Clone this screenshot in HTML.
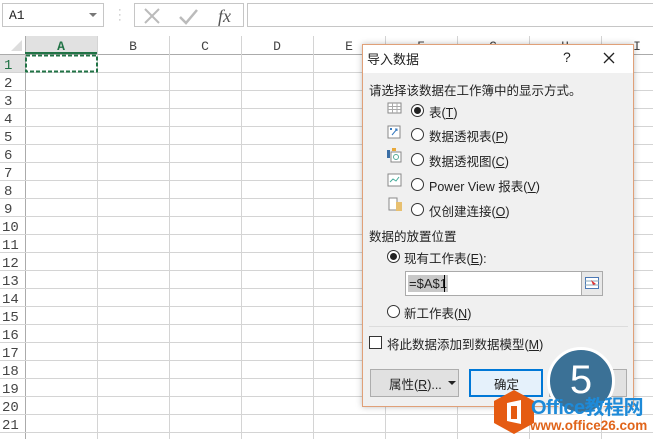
<!DOCTYPE html>
<html><head><meta charset="utf-8"><style>
*{margin:0;padding:0;box-sizing:border-box}
body{width:653px;height:439px;overflow:hidden;background:#fff;position:relative;font-family:"Liberation Sans","Noto Sans CJK SC",sans-serif;font-size:12px;color:#222}
.a{position:absolute}
.radio{position:absolute;width:13px;height:13px;border:1px solid #333;border-radius:50%;background:#fff}
.radio.on::after{content:"";position:absolute;left:2px;top:2px;width:7px;height:7px;border-radius:50%;background:#222}
.lbl{position:absolute;font-size:12.5px;color:#222;white-space:nowrap}
</style></head><body>
<div class="a" style="left:0;top:0;width:653px;height:32px;background:#fff"></div>
<div class="a" style="left:2px;top:3px;width:102px;height:24px;border:1px solid #c6c6c6;font-family:'Liberation Mono',monospace;font-size:13px;padding:4px 6px">A1</div>
<div class="a" style="left:89px;top:13px;width:0;height:0;border-left:4px solid transparent;border-right:4px solid transparent;border-top:4px solid #777"></div>
<div class="a" style="left:118px;top:8px;color:#aaa;font-size:11px;line-height:5px">·<br>·<br>·</div>
<div class="a" style="left:134px;top:3px;width:110px;height:24px;border:1px solid #c6c6c6"></div>
<svg class="a" style="left:142px;top:6px" width="100" height="20"><path d="M3 3L17 17M17 3L3 17" stroke="#bbb" stroke-width="2"/><path d="M38 11L44 17L55 4" stroke="#bbb" stroke-width="2.5" fill="none"/><text x="76" y="16" font-family="Liberation Serif" font-style="italic" font-size="18" fill="#555">fx</text></svg>
<div class="a" style="left:247px;top:3px;width:410px;height:24px;border:1px solid #c6c6c6"></div>
<svg class="a" style="left:0;top:36px" width="653" height="403">
<rect x="25" y="0" width="72" height="18" fill="#e1e1e1"/>
<rect x="0" y="18" width="25" height="18" fill="#e1e1e1"/>
<path d="M22 4L22 15L11 15Z" fill="#ddd"/>
<g stroke="#d4d4d4" stroke-width="1">
<line x1="0" y1="18.5" x2="653" y2="18.5" stroke="#ababab"/>
<line x1="25.5" y1="0" x2="25.5" y2="403" stroke="#ababab"/>
<line x1="97.5" y1="0" x2="97.5" y2="403"/><line x1="169.5" y1="0" x2="169.5" y2="403"/><line x1="241.5" y1="0" x2="241.5" y2="403"/><line x1="313.5" y1="0" x2="313.5" y2="403"/><line x1="385.5" y1="0" x2="385.5" y2="403"/><line x1="457.5" y1="0" x2="457.5" y2="403"/><line x1="529.5" y1="0" x2="529.5" y2="403"/><line x1="601.5" y1="0" x2="601.5" y2="403"/>
<line x1="0" y1="36.5" x2="653" y2="36.5"/><line x1="0" y1="54.5" x2="653" y2="54.5"/><line x1="0" y1="72.5" x2="653" y2="72.5"/><line x1="0" y1="90.5" x2="653" y2="90.5"/><line x1="0" y1="108.5" x2="653" y2="108.5"/><line x1="0" y1="126.5" x2="653" y2="126.5"/><line x1="0" y1="144.5" x2="653" y2="144.5"/><line x1="0" y1="162.5" x2="653" y2="162.5"/><line x1="0" y1="180.5" x2="653" y2="180.5"/><line x1="0" y1="198.5" x2="653" y2="198.5"/><line x1="0" y1="216.5" x2="653" y2="216.5"/><line x1="0" y1="234.5" x2="653" y2="234.5"/><line x1="0" y1="252.5" x2="653" y2="252.5"/><line x1="0" y1="270.5" x2="653" y2="270.5"/><line x1="0" y1="288.5" x2="653" y2="288.5"/><line x1="0" y1="306.5" x2="653" y2="306.5"/><line x1="0" y1="324.5" x2="653" y2="324.5"/><line x1="0" y1="342.5" x2="653" y2="342.5"/><line x1="0" y1="360.5" x2="653" y2="360.5"/><line x1="0" y1="378.5" x2="653" y2="378.5"/><line x1="0" y1="396.5" x2="653" y2="396.5"/>
</g>
<line x1="25" y1="17" x2="97" y2="17" stroke="#217346" stroke-width="2"/>
<g font-family="Liberation Mono,monospace" font-size="13" fill="#444" text-anchor="middle">
<text x="61" y="14" fill="#217346" font-weight="bold">A</text><text x="133" y="14">B</text><text x="205" y="14">C</text><text x="277" y="14">D</text><text x="349" y="14">E</text><text x="421" y="14">F</text><text x="493" y="14">G</text><text x="565" y="14">H</text><text x="637" y="14">I</text>
</g>
<g font-family="Liberation Mono,monospace" font-size="14" fill="#444">
<text x="4" y="33" fill="#217346">1</text><text x="4" y="51">2</text><text x="4" y="69">3</text><text x="4" y="87">4</text><text x="4" y="105">5</text><text x="4" y="123">6</text><text x="4" y="141">7</text><text x="4" y="159">8</text><text x="4" y="177">9</text><text x="2" y="195">10</text><text x="2" y="213">11</text><text x="2" y="231">12</text><text x="2" y="249">13</text><text x="2" y="267">14</text><text x="2" y="285">15</text><text x="2" y="303">16</text><text x="2" y="321">17</text><text x="2" y="339">18</text><text x="2" y="357">19</text><text x="2" y="375">20</text><text x="2" y="393">21</text>
</g>
<rect x="26" y="19.5" width="71" height="16" fill="none" stroke="#217346" stroke-width="2" stroke-dasharray="4 2"/>
</svg>
<div class="a" style="left:362px;top:44px;width:272px;height:363px;background:#f0f0f0;border:1px solid #e0a078;box-shadow:0 0 6px rgba(0,0,0,.25)"></div>
<div class="a" style="left:363px;top:45px;width:270px;height:28px;background:#fff"></div>
<div class="lbl" style="left:367px;top:49px;font-size:13px">导入数据</div>
<div class="lbl" style="left:563px;top:49px;font-size:14px">?</div>
<svg class="a" style="left:603px;top:52px" width="12" height="12"><path d="M1 1L11 11M11 1L1 11" stroke="#222" stroke-width="1.3"/></svg>
<div class="lbl" style="left:369px;top:80px">请选择该数据在工作簿中的显示方式。</div>
<svg class="a" style="left:387px;top:102px" width="16" height="120">
<rect x="1" y="1" width="13" height="10" fill="#fff" stroke="#888"/><path d="M1 4.5H14M1 7.5H14M5.5 1V11M10 1V11" stroke="#aaa"/>
<rect x="1" y="24" width="12" height="12" fill="#fff" stroke="#888"/><path d="M5 33L10 27M8 27H10V29" stroke="#3a7cc0"/><rect x="3" y="26" width="2" height="2" fill="#3a7cc0"/>
<rect x="0" y="48" width="3" height="8" fill="#3a6ea5"/><rect x="4" y="50" width="10" height="10" fill="#fff" stroke="#888"/><circle cx="9" cy="55" r="2.5" fill="none" stroke="#5a9"/><rect x="5" y="46" width="4" height="3" fill="#e8a83a"/>
<rect x="1" y="72" width="13" height="12" fill="#fff" stroke="#888"/><path d="M3 80L6 77L9 79L12 75" stroke="#4a9" fill="none"/>
<rect x="2" y="96" width="8" height="12" fill="#fff" stroke="#888"/><rect x="9" y="100" width="6" height="9" fill="#e8c070"/>
</svg>
<div class="radio on" style="left:411px;top:104px"></div><div class="lbl" style="left:429px;top:102px">表(<u>T</u>)</div>
<div class="radio" style="left:411px;top:128px"></div><div class="lbl" style="left:429px;top:126px">数据透视表(<u>P</u>)</div>
<div class="radio" style="left:411px;top:153px"></div><div class="lbl" style="left:429px;top:151px">数据透视图(<u>C</u>)</div>
<div class="radio" style="left:411px;top:178px"></div><div class="lbl" style="left:429px;top:176px">Power View 报表(<u>V</u>)</div>
<div class="radio" style="left:411px;top:203px"></div><div class="lbl" style="left:429px;top:201px">仅创建连接(<u>O</u>)</div>
<div class="lbl" style="left:369px;top:226px">数据的放置位置</div>
<div class="radio on" style="left:387px;top:250px"></div><div class="lbl" style="left:404px;top:248px">现有工作表(<u>E</u>):</div>
<div class="a" style="left:405px;top:271px;width:177px;height:25px;background:#fff;border:1px solid #aaa"></div>
<div class="a" style="left:408px;top:275px;height:17px;padding:0 1px;background:#c8c8c8;font-size:13px;line-height:17px">=$A$1</div>
<div class="a" style="left:444px;top:275px;width:1px;height:17px;background:#000"></div>
<div class="a" style="left:581px;top:271px;width:22px;height:25px;background:#e8e8e8;border:1px solid #aaa"></div>
<svg class="a" style="left:585px;top:277px" width="14" height="12"><rect x="0.5" y="0.5" width="13" height="11" fill="#fff" stroke="#4a78b5"/><path d="M0 4H14M0 8H14" stroke="#8ab"/><path d="M6 3L11 7L8 8Z" fill="#d33"/></svg>
<div class="radio" style="left:387px;top:305px"></div><div class="lbl" style="left:404px;top:303px">新工作表(<u>N</u>)</div>
<div class="a" style="left:369px;top:326px;width:259px;height:1px;background:#dcdcdc"></div>
<div class="a" style="left:369px;top:336px;width:13px;height:13px;background:#fff;border:1px solid #333"></div>
<div class="lbl" style="left:387px;top:334px">将此数据添加到数据模型(<u>M</u>)</div>
<div class="a" style="left:370px;top:369px;width:89px;height:28px;background:#e1e1e1;border:1px solid #adadad"></div>
<div class="lbl" style="left:389px;top:374px">属性(<u>R</u>)...</div>
<div class="a" style="left:448px;top:381px;border-left:4px solid transparent;border-right:4px solid transparent;border-top:4px solid #222"></div>
<div class="a" style="left:469px;top:369px;width:74px;height:28px;background:#e5f1fb;border:2px solid #0078d7"></div>
<div class="lbl" style="left:494px;top:374px">确定</div>
<div class="a" style="left:549px;top:369px;width:78px;height:28px;background:#e1e1e1;border:1px solid #adadad"></div>
<div class="a" style="left:547px;top:347px;width:68px;height:68px;border-radius:50%;background:#3b7196;border:3px solid #fff;color:#fff;font-size:40px;text-align:center;line-height:60px;font-family:'Liberation Sans',sans-serif">5</div>
<svg class="a" style="left:490px;top:388px" width="48" height="48"><path d="M24 2L44 13V35L24 46L4 35V13Z" fill="#e55b12"/><path d="M17 15L31 12V36L17 33Z" fill="#fff"/><rect x="21" y="18" width="6" height="13" fill="#e55b12"/></svg>
<div class="a" style="left:531px;top:391px;color:#1e8ad8;font-size:20px;font-weight:bold;white-space:nowrap;letter-spacing:-0.5px">Office教程网</div>
<div class="a" style="left:530px;top:418px;color:#e0641a;font-size:13.5px;font-weight:bold;white-space:nowrap">www.office26.com</div>
</body></html>
